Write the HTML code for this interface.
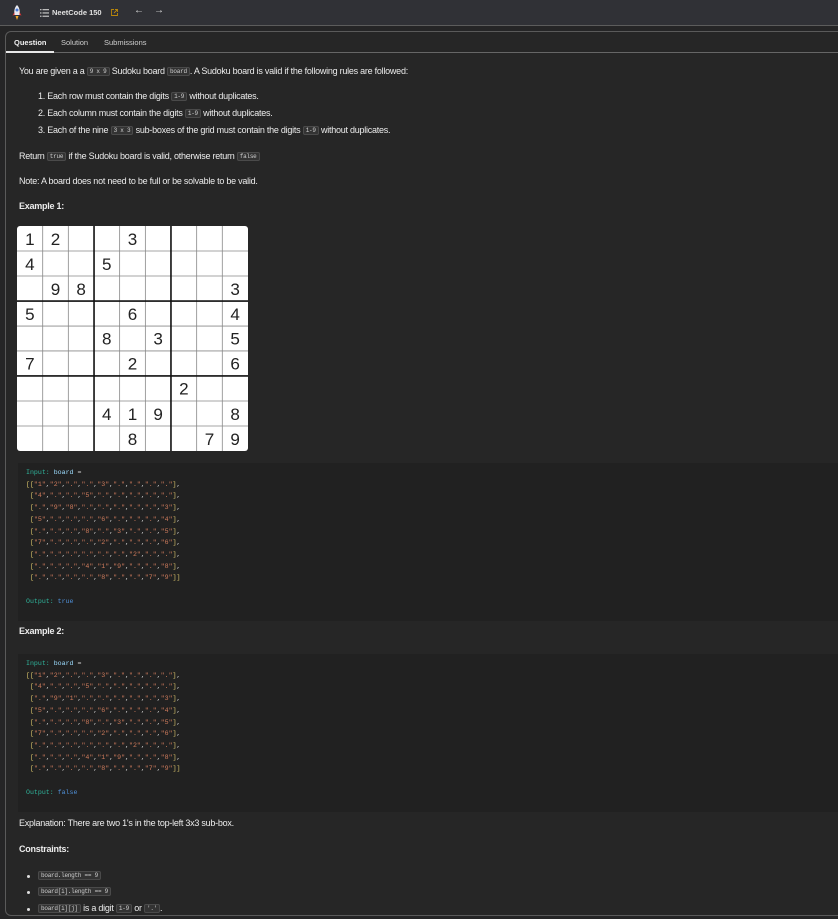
<!DOCTYPE html>
<html><head><meta charset="utf-8"><style>
*{margin:0;padding:0;box-sizing:border-box}
body{width:838px;height:919px;background:#252526;font-family:"Liberation Sans",sans-serif;color:#e6e6e6;position:relative;overflow:hidden}
.top{position:absolute;left:0;top:0;width:838px;height:26px;background:#303136;border-bottom:1px solid #5c5c5c}
.panel{position:absolute;left:5px;top:31px;width:840px;height:885px;border:1px solid #5a5a5a;border-radius:6px;background:#262626}
.tabs{position:absolute;left:0;top:0;width:100%;height:21px;border-bottom:1px solid #666}
.tab{position:absolute;top:6px;font-size:7.5px;color:#cfcfcf}
.t{position:absolute;left:13px;font-size:9px;letter-spacing:-0.25px;white-space:nowrap;color:#ececec}
code{font-family:"Liberation Mono",monospace;font-size:6px;background:#333;border:1px solid #4a4a4a;border-radius:2px;padding:0 2px;color:#cfcfcf;position:relative;top:-1px}
.b{font-weight:bold}
.cb{position:absolute;left:12px;width:830px;background:#212121;font-family:"Liberation Mono",monospace;font-size:6.6px;line-height:11.7px;color:#d4d4d4;padding-left:8px;white-space:pre}
.k{color:#2fb39a}.v{color:#9cdcfe}.o{color:#4f8fd6}
i{font-style:normal;color:#ce7b5c}
.br{color:#d9c46a}
.dot{position:absolute;width:3px;height:3px;border-radius:50%;background:#ddd;left:27px}
</style></head><body>
<div class="top">
<svg style="position:absolute;left:12px;top:5px" width="10" height="16" viewBox="0 0 10 16"><path d="M5 0 C8 3 8 7 7.5 10 L2.5 10 C2 7 2 3 5 0Z" fill="#e8e8ee"/><circle cx="5" cy="5" r="1.5" fill="#4a7bd8"/><path d="M2.5 7 L0.5 10.5 L2.5 10Z M7.5 7 L9.5 10.5 L7.5 10Z" fill="#d33"/><path d="M3.5 11 L6.5 11 L5 15Z" fill="#f5a623"/></svg>
<svg style="position:absolute;left:40px;top:9px" width="9" height="8" viewBox="0 0 9 8"><g fill="#bbb"><rect x="0" y="0" width="1.5" height="1.3"/><rect x="2.5" y="0" width="6.5" height="1.3"/><rect x="0" y="3.3" width="1.5" height="1.3"/><rect x="2.5" y="3.3" width="6.5" height="1.3"/><rect x="0" y="6.6" width="1.5" height="1.3"/><rect x="2.5" y="6.6" width="6.5" height="1.3"/></g></svg>
<div style="position:absolute;left:52px;top:8px;font-size:7.5px;font-weight:bold;color:#e0e0e0">NeetCode 150</div>
<svg style="position:absolute;left:111px;top:9px" width="7" height="7" viewBox="0 0 7 7"><path d="M3 0.5H0.5V6.5H6.5V4 M4 0.5H6.5V3 M6.5 0.5L3 4" fill="none" stroke="#b8860b" stroke-width="0.9"/></svg>
<div style="position:absolute;left:134px;top:5px;font-size:10px;color:#ddd">←</div>
<div style="position:absolute;left:154px;top:5px;font-size:10px;color:#ddd">→</div>
</div>
<div class="panel">
<div class="tabs">
<div class="tab b" style="left:8px;color:#f0f0f0">Question</div>
<div class="tab" style="left:55px">Solution</div>
<div class="tab" style="left:98px">Submissions</div>
<div style="position:absolute;left:0;top:19px;width:48px;height:2px;background:#e8e8e8"></div>
</div>
<div class="t" style="top:34px">You are given a a <code>9 x 9</code> Sudoku board <code>board</code>. A Sudoku board is valid if the following rules are followed:</div>
<div class="t" style="top:59px;left:32px">1. Each row must contain the digits <code>1-9</code> without duplicates.</div>
<div class="t" style="top:76px;left:32px">2. Each column must contain the digits <code>1-9</code> without duplicates.</div>
<div class="t" style="top:93px;left:32px">3. Each of the nine <code>3 x 3</code> sub-boxes of the grid must contain the digits <code>1-9</code> without duplicates.</div>
<div class="t" style="top:119px">Return <code>true</code> if the Sudoku board is valid, otherwise return <code>false</code></div>
<div class="t" style="top:144px">Note: A board does not need to be full or be solvable to be valid.</div>
<div class="t b" style="top:169px">Example 1:</div>
<svg style="position:absolute;left:11px;top:194px" width="231" height="225" viewBox="0 0 230 224">
<rect x="0" y="0" width="230" height="224" rx="3" fill="#fff"/>
<g stroke="#888" stroke-width="0.8">
<line x1="25.6" y1="0" x2="25.6" y2="224"/><line x1="51.1" y1="0" x2="51.1" y2="224"/><line x1="102.2" y1="0" x2="102.2" y2="224"/><line x1="127.8" y1="0" x2="127.8" y2="224"/><line x1="178.9" y1="0" x2="178.9" y2="224"/><line x1="204.4" y1="0" x2="204.4" y2="224"/>
<line y1="24.9" x1="0" y2="24.9" x2="230"/><line y1="49.8" x1="0" y2="49.8" x2="230"/><line y1="99.6" x1="0" y2="99.6" x2="230"/><line y1="124.4" x1="0" y2="124.4" x2="230"/><line y1="174.2" x1="0" y2="174.2" x2="230"/><line y1="199.1" x1="0" y2="199.1" x2="230"/>
</g>
<g stroke="#111" stroke-width="1.6">
<line x1="76.7" y1="0" x2="76.7" y2="224"/><line x1="153.3" y1="0" x2="153.3" y2="224"/>
<line y1="74.7" x1="0" y2="74.7" x2="230"/><line y1="149.3" x1="0" y2="149.3" x2="230"/>
</g>
<g font-family="Liberation Sans,sans-serif" font-size="17" fill="#222" text-anchor="middle">
<text x="12.8" y="19">1</text><text x="38.3" y="19">2</text><text x="115" y="19">3</text>
<text x="12.8" y="44">4</text><text x="89.4" y="44">5</text>
<text x="38.3" y="68.5">9</text><text x="63.9" y="68.5">8</text><text x="217.2" y="68.5">3</text>
<text x="12.8" y="93.5">5</text><text x="115" y="93.5">6</text><text x="217.2" y="93.5">4</text>
<text x="89.4" y="118">8</text><text x="140.5" y="118">3</text><text x="217.2" y="118">5</text>
<text x="12.8" y="143">7</text><text x="115" y="143">2</text><text x="217.2" y="143">6</text>
<text x="166.1" y="168">2</text>
<text x="89.4" y="193">4</text><text x="115" y="193">1</text><text x="140.5" y="193">9</text><text x="217.2" y="193">8</text>
<text x="115" y="218">8</text><text x="191.7" y="218">7</text><text x="217.2" y="218">9</text>
</g>
</svg>
<div class="cb" style="top:431px;height:158px;padding-top:4px"><span class="k">Input:</span> <span class="v">board</span> =
<span class="br">[[</span><i>"1"</i>,<i>"2"</i>,<i>"."</i>,<i>"."</i>,<i>"3"</i>,<i>"."</i>,<i>"."</i>,<i>"."</i>,<i>"."</i><span class="br">]</span>,
 <span class="br">[</span><i>"4"</i>,<i>"."</i>,<i>"."</i>,<i>"5"</i>,<i>"."</i>,<i>"."</i>,<i>"."</i>,<i>"."</i>,<i>"."</i><span class="br">]</span>,
 <span class="br">[</span><i>"."</i>,<i>"9"</i>,<i>"8"</i>,<i>"."</i>,<i>"."</i>,<i>"."</i>,<i>"."</i>,<i>"."</i>,<i>"3"</i><span class="br">]</span>,
 <span class="br">[</span><i>"5"</i>,<i>"."</i>,<i>"."</i>,<i>"."</i>,<i>"6"</i>,<i>"."</i>,<i>"."</i>,<i>"."</i>,<i>"4"</i><span class="br">]</span>,
 <span class="br">[</span><i>"."</i>,<i>"."</i>,<i>"."</i>,<i>"8"</i>,<i>"."</i>,<i>"3"</i>,<i>"."</i>,<i>"."</i>,<i>"5"</i><span class="br">]</span>,
 <span class="br">[</span><i>"7"</i>,<i>"."</i>,<i>"."</i>,<i>"."</i>,<i>"2"</i>,<i>"."</i>,<i>"."</i>,<i>"."</i>,<i>"6"</i><span class="br">]</span>,
 <span class="br">[</span><i>"."</i>,<i>"."</i>,<i>"."</i>,<i>"."</i>,<i>"."</i>,<i>"."</i>,<i>"2"</i>,<i>"."</i>,<i>"."</i><span class="br">]</span>,
 <span class="br">[</span><i>"."</i>,<i>"."</i>,<i>"."</i>,<i>"4"</i>,<i>"1"</i>,<i>"9"</i>,<i>"."</i>,<i>"."</i>,<i>"8"</i><span class="br">]</span>,
 <span class="br">[</span><i>"."</i>,<i>"."</i>,<i>"."</i>,<i>"."</i>,<i>"8"</i>,<i>"."</i>,<i>"."</i>,<i>"7"</i>,<i>"9"</i><span class="br">]]</span>

<span class="k">Output:</span> <span class="o">true</span></div>
<div class="t b" style="top:594px">Example 2:</div>
<div class="cb" style="top:622px;height:158px;padding-top:4px"><span class="k">Input:</span> <span class="v">board</span> =
<span class="br">[[</span><i>"1"</i>,<i>"2"</i>,<i>"."</i>,<i>"."</i>,<i>"3"</i>,<i>"."</i>,<i>"."</i>,<i>"."</i>,<i>"."</i><span class="br">]</span>,
 <span class="br">[</span><i>"4"</i>,<i>"."</i>,<i>"."</i>,<i>"5"</i>,<i>"."</i>,<i>"."</i>,<i>"."</i>,<i>"."</i>,<i>"."</i><span class="br">]</span>,
 <span class="br">[</span><i>"."</i>,<i>"9"</i>,<i>"1"</i>,<i>"."</i>,<i>"."</i>,<i>"."</i>,<i>"."</i>,<i>"."</i>,<i>"3"</i><span class="br">]</span>,
 <span class="br">[</span><i>"5"</i>,<i>"."</i>,<i>"."</i>,<i>"."</i>,<i>"6"</i>,<i>"."</i>,<i>"."</i>,<i>"."</i>,<i>"4"</i><span class="br">]</span>,
 <span class="br">[</span><i>"."</i>,<i>"."</i>,<i>"."</i>,<i>"8"</i>,<i>"."</i>,<i>"3"</i>,<i>"."</i>,<i>"."</i>,<i>"5"</i><span class="br">]</span>,
 <span class="br">[</span><i>"7"</i>,<i>"."</i>,<i>"."</i>,<i>"."</i>,<i>"2"</i>,<i>"."</i>,<i>"."</i>,<i>"."</i>,<i>"6"</i><span class="br">]</span>,
 <span class="br">[</span><i>"."</i>,<i>"."</i>,<i>"."</i>,<i>"."</i>,<i>"."</i>,<i>"."</i>,<i>"2"</i>,<i>"."</i>,<i>"."</i><span class="br">]</span>,
 <span class="br">[</span><i>"."</i>,<i>"."</i>,<i>"."</i>,<i>"4"</i>,<i>"1"</i>,<i>"9"</i>,<i>"."</i>,<i>"."</i>,<i>"8"</i><span class="br">]</span>,
 <span class="br">[</span><i>"."</i>,<i>"."</i>,<i>"."</i>,<i>"."</i>,<i>"8"</i>,<i>"."</i>,<i>"."</i>,<i>"7"</i>,<i>"9"</i><span class="br">]]</span>

<span class="k">Output:</span> <span class="o">false</span></div>
<div class="t" style="top:786px">Explanation: There are two 1's in the top-left 3x3 sub-box.</div>
<div class="t b" style="top:812px">Constraints:</div>
<div class="dot" style="top:843px;left:21px"></div>
<div class="t" style="top:838px;left:32px"><code>board.length == 9</code></div>
<div class="dot" style="top:859px;left:21px"></div>
<div class="t" style="top:854px;left:32px"><code>board[i].length == 9</code></div>
<div class="dot" style="top:876px;left:21px"></div>
<div class="t" style="top:871px;left:32px"><code>board[i][j]</code> is a digit <code>1-9</code> or <code>'.'</code>.</div>
</div>
</body></html>
